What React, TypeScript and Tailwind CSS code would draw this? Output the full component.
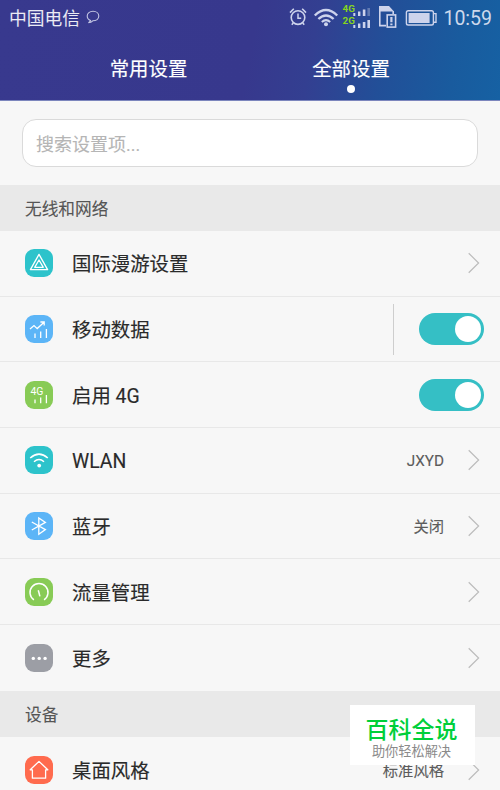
import type { ReactNode } from "react";

const Chevron = () => (
    <svg className="w-3 h-[22px] shrink-0" viewBox="0 0 12 22" fill="none" stroke="#bcbcbc" strokeWidth="1.2">
        <path d="M0.7 1.2 L10.6 11 L0.7 20.8" />
    </svg>
)

const Toggle = () => (
    <div className="flex h-8 w-[65px] shrink-0 items-center justify-end rounded-full bg-[#35bfc5] pr-[3px]">
        <span className="block size-[26px] rounded-full bg-white"></span>
    </div>
)

const StatusBar = () => {
    return (
        <div className="flex h-9 items-center pl-[9px] pr-2 text-white/90">
            <p className="mt-[2px] text-[17.8px] leading-9">中国电信</p>
            <svg className="ml-[6px] -mt-[3px] size-[14px]" viewBox="0 0 14 14" fill="none" stroke="#c3c5e3" strokeWidth="1.1">
                <path d="M4.6 10.4 C2.2 9.6 1.2 7.9 1.2 6 C1.2 3.3 3.7 1.2 7 1.2 C10.3 1.2 12.8 3.3 12.8 6 C12.8 8.8 10.3 10.8 6.8 10.8 C5.6 12 4.2 12.6 2.4 12.8 C3.6 12.2 4.4 11.4 4.6 10.4 Z" />
            </svg>

            <div className="ml-auto flex items-center">
                <svg className="h-9 w-[155px]" viewBox="0 0 155 36" fill="none" stroke="#cdd3ec">
                    {/* alarm */}
                    <circle cx="10" cy="17.6" r="6.8" strokeWidth="1.6" />
                    <path d="M10 13.4 V18.2 H13.2" strokeWidth="1.5" />
                    <path d="M2 12.6 L5.8 8.8 M18 12.6 L14.2 8.8 M5.2 23 L3.8 24.8 M14.8 23 L16.2 24.8" strokeWidth="1.6" />
                    {/* wifi */}
                    <path d="M26.8 15.5 Q38 4.6 49.2 15.5" strokeWidth="2.4" />
                    <path d="M30.4 19 Q38 11.8 45.6 19" strokeWidth="2.4" />
                    <path d="M33.8 22 Q38 18.2 42.2 22" strokeWidth="2" />
                    <circle cx="38" cy="24.2" r="2" fill="#cdd3ec" stroke="none" />
                    {/* signal */}
                    <g stroke="none" fill="#86d51c" fontSize="9.8" fontWeight="700" fontFamily="Roboto, sans-serif">
                        <text x="54.6" y="12.2">4G</text>
                        <text x="54.6" y="24.4">2G</text>
                    </g>
                    <g stroke="none" fill="#cdd3ec">
                        <rect x="65.3" y="13" width="2" height="3" />
                        <rect x="70" y="11.5" width="2.4" height="4.5" />
                        <rect x="74.8" y="9.5" width="2.6" height="6.5" />
                        <rect x="79.4" y="8" width="2.6" height="8" opacity="0.35" />
                        <rect x="65.3" y="25" width="2" height="3" />
                        <rect x="70" y="23.5" width="2.4" height="4.5" />
                        <rect x="74.8" y="22" width="2.6" height="6" />
                        <rect x="79.4" y="20" width="2.6" height="8" />
                    </g>
                    {/* sim card */}
                    <path d="M98 25.6 H91.8 V6.8 M105.2 11 V14" strokeWidth="1.6" />
                    <path d="M91 6 H101 L106 11.5 H91 Z" fill="#cdd3ec" stroke="none" />
                    <rect x="99.2" y="14.9" width="8.4" height="12.2" strokeWidth="1.6" />
                    <path d="M103.4 17 V22.2 M103.4 23.6 V25.2" strokeWidth="2.2" />
                    {/* battery */}
                    <rect x="118.4" y="10.8" width="27" height="14.2" rx="1.8" strokeWidth="1.4" />
                    <rect x="120.6" y="13" width="21" height="10" fill="#cdd3ec" stroke="none" />
                    <path d="M145.6 13.6 H148 V22.2 H145.6" strokeWidth="1.4" />
                </svg>
                <p className="ml-[-1px] mt-[2px] w-[50px] text-right text-[19.5px] leading-9 text-[#cdd9ec]">10:59</p>
            </div>
        </div>
    )
}

const IconBox = ({ color, children }: { color: string, children: ReactNode }) => (
    <svg className={`size-7 shrink-0 rounded-[9px] ${color}`} viewBox="0 0 28 28" fill="none" stroke="white" strokeWidth="1.3">
        {children}
    </svg>
)

const SectionTitle = ({ title }: { title: string }) => (
    <h2 className="h-[46px] shrink-0 bg-[#e9e9e9] pl-[25px] text-[16.7px] leading-[50px] text-[#555] [-webkit-text-stroke:0.1px]">{title}</h2>
)

type RowProps = {
    title: string
    icon: ReactNode
    value?: string
    toggle?: boolean
    divider?: boolean
    last?: boolean
}

const Row = ({ title, icon, value, toggle, divider, last }: RowProps) => {
    return (
        <div className={`flex h-[65.7px] shrink-0 items-center pl-[25px] ${toggle ? "pr-4" : "pr-5"} ${last ? "" : "border-b border-[#e8e8e8]"}`}>
            {icon}
            <p className="ml-[19px] mt-[4px] text-[19.4px] leading-7 text-[#2a2a2a] [-webkit-text-stroke:0.15px]">{title}</p>
            <div className="ml-auto flex items-center">
                {value && <p className="mr-6 mt-[2px] text-[15.3px] leading-6 text-[#5c5c5c] [-webkit-text-stroke:0.1px]">{value}</p>}
                {divider && <span className="mr-[25px] h-[51px] w-px bg-[#cecece]"></span>}
                {toggle ? <Toggle /> : <Chevron />}
            </div>
        </div>
    )
}

const App = () => {
    return (
        <div className="relative flex h-[790px] w-[500px] flex-col overflow-hidden bg-[#f7f7f7] font-[Roboto,'Noto_Sans_CJK_SC',sans-serif]">

            <header className="h-[101px] shrink-0 border-b border-[#7c86bd] bg-[linear-gradient(100deg,#38398e_0%,#37388d_50%,#333f91_62%,#224f98_76%,#195b9e_90%,#1661a3_100%)]">
                <StatusBar />
                <nav className="flex justify-center text-[19.4px] leading-7 text-white [-webkit-text-stroke:0.15px]">
                    <div className="flex w-[202px] flex-col items-center pt-[20px] pr-px">常用设置</div>
                    <div className="flex w-[202px] flex-col items-center pt-[20px]">
                        全部设置
                        <span className="mt-px block size-2 rounded-full bg-white"></span>
                    </div>
                </nav>
            </header>

            <div className="h-[84px] shrink-0 px-[22px] pt-[18px]">
                <div className="h-12 rounded-[14px] border border-[#dadada] bg-white pl-[13px] text-[18px] leading-[49px] text-[#b5b5b5] [-webkit-text-stroke:0.1px]">搜索设置项...</div>
            </div>

            <SectionTitle title="无线和网络" />

            <Row
                title="国际漫游设置"
                icon={
                    <IconBox color="bg-[#2dc3cb]">
                        <path d="M14 5.4 L22.6 20.6 H5.4 Z" strokeLinejoin="round" />
                        <path d="M14 11 L18.3 18.3 H9.7 Z" strokeLinejoin="round" />
                    </IconBox>
                }
            />
            <Row
                title="移动数据"
                toggle
                divider
                icon={
                    <IconBox color="bg-[#5cb5f7]">
                        <path d="M5 14 L9 10.6 L12.2 13.6 L18.8 7.6 M15.4 7 H19.2 V10.6" />
                        <path d="M10 18.5 V23 M15.7 16.5 V23 M21.4 14 V23" />
                    </IconBox>
                }
            />
            <Row
                title="启用 4G"
                toggle
                icon={
                    <IconBox color="bg-[#88cb56]">
                        <text x="5.4" y="13.8" fontSize="10.4" fill="white" stroke="none" fontFamily="Roboto, sans-serif">4G</text>
                        <path d="M10 18.5 V22.3 M15.7 16.5 V22.3 M21.4 14 V22.3" />
                    </IconBox>
                }
            />
            <Row
                title="WLAN"
                value="JXYD"
                icon={
                    <IconBox color="bg-[#2dc3cb]">
                        <path d="M5.2 12 Q14 4.2 22.8 12" strokeWidth="1.5" />
                        <path d="M9 15.7 Q14 11.4 19 15.7" strokeWidth="1.5" />
                        <circle cx="14.2" cy="19.6" r="1.9" fill="white" stroke="none" />
                    </IconBox>
                }
            />
            <Row
                title="蓝牙"
                value="关闭"
                icon={
                    <IconBox color="bg-[#5cb5f7]">
                        <path d="M6.8 10 L20.4 17.6 L13.8 22.2 V6 L20.4 10.4 L6.8 18" />
                    </IconBox>
                }
            />
            <Row
                title="流量管理"
                icon={
                    <IconBox color="bg-[#88cb56]">
                        <path d="M8.9 21.8 A9 9 0 1 1 19.1 21.8" strokeWidth="1.5" />
                        <path d="M13.3 12.2 L14.9 18.4" strokeWidth="1.5" />
                    </IconBox>
                }
            />
            <Row
                title="更多"
                last
                icon={
                    <IconBox color="bg-[#9c9ea5]">
                        <g fill="white" stroke="none">
                            <circle cx="8.3" cy="14.4" r="1.7" />
                            <circle cx="14.2" cy="14.4" r="1.7" />
                            <circle cx="20.1" cy="14.4" r="1.7" />
                        </g>
                    </IconBox>
                }
            />

            <SectionTitle title="设备" />

            <Row
                title="桌面风格"
                value="标准风格"
                last
                icon={
                    <IconBox color="bg-[#ff6b4e]">
                        <path d="M5.2 13.8 L14 5.4 L22.8 13.8 H20.6 V22.2 H7.4 V13.8 Z" strokeLinejoin="round" />
                    </IconBox>
                }
            />

            <div className="absolute left-[350px] top-[705px] flex h-[60px] w-[125px] flex-col items-center bg-white pt-[11px]">
                <p className="pr-[2px] text-[23px] font-medium leading-[30px] text-[#00cf3a]">百科全说</p>
                <p className="pr-[2px] text-[13.2px] leading-[12px] text-[#8a8a8a]">助你轻松解决</p>
            </div>
        </div>
    )
}

export default App
